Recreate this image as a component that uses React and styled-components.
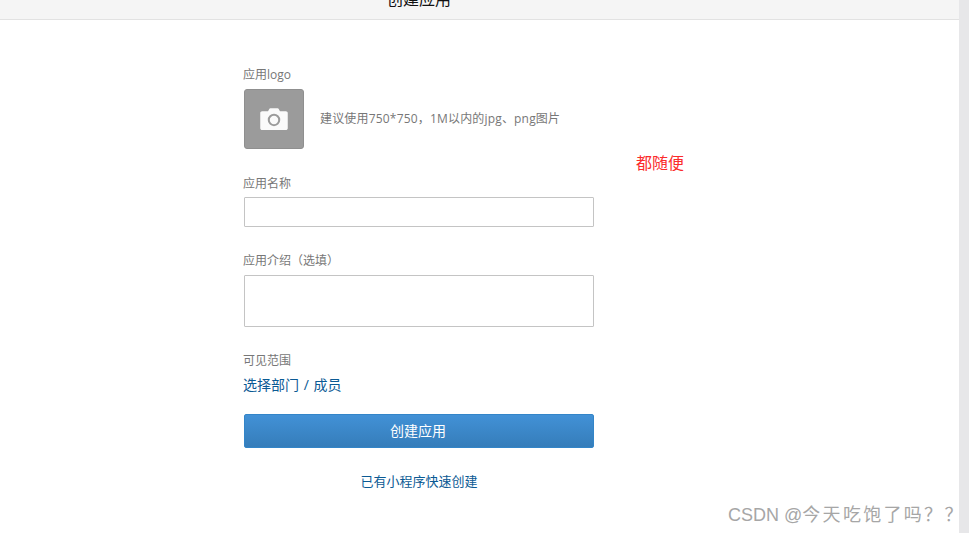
import styled, { createGlobalStyle } from 'styled-components';

const GlobalStyle = createGlobalStyle`
  html, body {
    margin: 0;
    padding: 0;
    height: 100%;
    overflow: hidden;
    background: #fff;
    font-family: "Open Sans", "Noto Sans CJK SC", sans-serif;
  }
  * { box-sizing: border-box; }
`;

const Page = styled.div`
  position: relative;
  display: flex;
  width: 969px;
  height: 533px;
  overflow: hidden;
`;

const Main = styled.main`
  width: 959px;
  display: flex;
  flex-direction: column;
`;

const Scrollbar = styled.div`
  width: 10px;
  background: #e7e7e9;
`;

const Header = styled.header`
  height: 20px;
  background: #f5f5f5;
  border-bottom: 1px solid #e2e2e2;
  padding-left: 244px;
  overflow: hidden;
`;

const HeaderTitle = styled.h1`
  width: 350px;
  margin: -11px 0 0;
  font-size: 16px;
  line-height: 20px;
  font-weight: 400;
  color: #111;
  text-align: center;
`;

const Form = styled.form`
  width: 350px;
  margin-left: 244px;
  padding-top: 46px;
  display: flex;
  flex-direction: column;
`;

const Label = styled.label`
  display: block;
  margin: 0 0 ${(props) => props.$gap}px -1px;
  font-size: 12px;
  line-height: 18px;
  color: #777;
`;

const LogoRow = styled.div`
  display: flex;
  align-items: center;
  gap: 16px;
  margin-bottom: 26px;
`;

const LogoBox = styled.div`
  width: 60px;
  height: 60px;
  display: flex;
  align-items: center;
  justify-content: center;
  background: #9b9b9b;
  border: 1px solid #8f8f8f;
  border-radius: 3px;
`;

const Hint = styled.span`
  font-size: 12px;
  line-height: 16px;
  letter-spacing: 0.18px;
  color: #777;
`;

const TextInput = styled.input`
  display: block;
  width: 350px;
  height: 30px;
  margin-bottom: 25px;
  border: 1px solid #c4c4c4;
  border-radius: 1px;
  background: #fff;
  outline: none;
`;

const TextArea = styled.textarea`
  display: block;
  width: 350px;
  height: 52px;
  margin-bottom: 25px;
  border: 1px solid #c4c4c4;
  border-radius: 1px;
  background: #fff;
  outline: none;
  resize: none;
`;

const PickLink = styled.a`
  display: block;
  margin: 0 0 19px -1px;
  font-size: 14px;
  line-height: 20px;
  word-spacing: 1px;
  color: #0b5a94;
  cursor: pointer;
`;

const SubmitButton = styled.button`
  display: block;
  width: 350px;
  height: 34px;
  margin-bottom: 24px;
  padding: 0 2px 2px 0;
  border: 1px solid #3385c8;
  border-radius: 2px;
  background: linear-gradient(#4291d6, #357dba);
  color: #fff;
  font-family: inherit;
  font-size: 14px;
  cursor: pointer;
`;

const QuickLink = styled.a`
  display: block;
  font-size: 13px;
  line-height: 18px;
  color: #0b5a94;
  text-align: center;
  cursor: pointer;
`;

const Annotation = styled.span`
  position: absolute;
  left: 636px;
  top: 153px;
  font-size: 16px;
  line-height: 20px;
  color: #fb2b2b;
`;

const Watermark = styled.span`
  position: absolute;
  left: 728px;
  top: 504px;
  font-family: "Liberation Sans", "Noto Sans CJK SC", sans-serif;
  font-size: 18px;
  line-height: 22px;
  letter-spacing: 2.3px;
  white-space: nowrap;
  color: #a6a6a6;
`;

const WatermarkSite = styled.span`
  letter-spacing: 0;
`;

function CameraIcon() {
  return (
    <svg width="28" height="22" viewBox="0 0 30 24">
      <path
        fill="#fafafa"
        d="M2 3.5h6.5L10 .8C10.200.4 10.500.2 11 .2h8c.5 0 .8.2 1 .6l1.500 2.700H28c1 0 2 .8 2 2V22c0 1.200-1 2-2 2H2c-1 0-2-.8-2-2V5.500c0-1.200 1-2 2-2z"
      />
      <circle cx="15" cy="13" r="5.700" fill="none" stroke="#9b9b9b" strokeWidth="2.200" />
    </svg>
  );
}

function App() {
  return (
    <Page>
      <GlobalStyle />
      <Main>
        <Header>
          <HeaderTitle>创建应用</HeaderTitle>
        </Header>
        <Form>
          <Label $gap={5}>应用logo</Label>
          <LogoRow>
            <LogoBox>
              <CameraIcon />
            </LogoBox>
            <Hint>建议使用750*750，1M以内的jpg、png图片</Hint>
          </LogoRow>
          <Label $gap={4}>应用名称</Label>
          <TextInput type="text" />
          <Label $gap={5}>应用介绍（选填）</Label>
          <TextArea />
          <Label $gap={5}>可见范围</Label>
          <PickLink>选择部门 / 成员</PickLink>
          <SubmitButton type="button">创建应用</SubmitButton>
          <QuickLink>已有小程序快速创建</QuickLink>
        </Form>
      </Main>
      <Scrollbar />
      <Annotation>都随便</Annotation>
      <Watermark>
        <WatermarkSite>CSDN @</WatermarkSite>今天吃饱了吗？？
      </Watermark>
    </Page>
  );
}

export default App;
